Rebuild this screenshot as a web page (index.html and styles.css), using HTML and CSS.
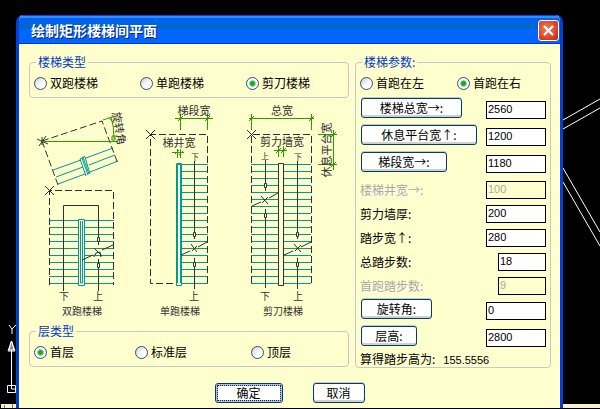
FILE: index.html
```html
<!DOCTYPE html>
<html lang="zh-CN">
<head>
<meta charset="utf-8">
<title>绘制矩形楼梯间平面</title>
<link rel="stylesheet" href="styles.css">
</head>
<body>
<svg class="canvas" aria-hidden="true">
  <g fill="none" stroke="#fff">
    <path d="M563 120L600 99M563 129L600 108M563 168L600 232M563 182L600 246"/>
    <path d="M9 325l3 4v5m0-5l4-4M11.500 341v44M8 351l3.500-10 3.500 10zM7.500 385.500h8v7h-8zM11.500 385v4h4"/>
    <path d="M9 350l2.500-9 2.500 9z" fill="#888"/>
  </g>
  <path d="M1 404h15v4H1zM563 404h37v4h-37z" fill="#f7f3cf"/>
  <path d="M4.500 405v3M12.500 404v4" stroke="#777"/>
</svg>

<form class="dialog">
  <header class="titlebar">
    <h1 class="title">绘制矩形楼梯间平面</h1>
    <button class="close" type="button" aria-label="关闭">
      <svg viewBox="0 0 19 19"><path d="M5 5l9 9M14 5l-9 9" stroke="#fff" stroke-width="2.200"/></svg>
    </button>
  </header>

  <div class="content">
    <div class="column">
      <fieldset class="group">
        <legend>楼梯类型</legend>
        <div class="choices choices-stair">
          <label class="choice"><input type="radio" name="stair">双跑楼梯</label>
          <label class="choice"><input type="radio" name="stair">单跑楼梯</label>
          <label class="choice"><input type="radio" name="stair" checked>剪刀楼梯</label>
        </div>
      </fieldset>

      <svg class="diagram" viewBox="29 98 320 226" role="img" aria-label="楼梯示意图">
        <!-- treads -->
        <g class="teal">
          <path d="M53 170L81 160M86 158L113 148M56 177L83 167M89 165L115 155M58 184L85 174M90 172L118 161"/>
          <path d="M80 159l6 17M82 158l6 17M83 157l6 17M85 157l5 17M80 159l5-3"/>
          <path d="M49 220.500h65M49 227.500h65M49 234.500h65M49 241.500h65M49 248.500h65M49 255.500h65M49 262.500h65M49 269.500h65M49 276.500h65M49 283.500h65"/>
          <path class="rail" d="M78.500 219.500h6v66h-6z"/><path d="M80.500 221v62h2v-62"/>
          <path d="M182 164.500h26M182 171.500h26M182 178.500h26M182 185.500h26M182 192.500h26M182 199.500h26M182 206.500h26M182 213.500h26M182 220.500h26M182 227.500h26M182 234.500h26M182 241.500h26M182 248.500h26M182 255.500h26M182 262.500h26M182 269.500h26M182 276.500h26M182 283.500h26"/>
          <path d="M176.500 163.500h5v122h-5zM177.500 283V164.500h3V283"/>
          <path d="M251 164.500h60M251 171.500h60M251 178.500h60M251 185.500h60M251 192.500h60M251 199.500h60M251 206.500h60M251 213.500h60M251 220.500h60M251 227.500h60M251 234.500h60M251 241.500h60M251 248.500h60M251 255.500h60M251 262.500h60M251 269.500h60M251 276.500h60M251 283.500h60"/>
        </g>
        <!-- outlines -->
        <g class="ink dashed">
          <path d="M42 141L102 121L118 164M42 141L58 185"/>
          <path d="M49.500 285V190.500H113.500V285"/>
          <path d="M207.500 283V134.500H150.500V283.500H176"/>
          <path d="M251.500 283V134.500H311.500V283"/>
        </g>
        <g class="ink">
          <path d="M37 139l11 5M39 146l7-10M42 137v8M45 186l9 9M45 195l9-9M146 130l9 9M146 139l9-9M247 130l9 9M247 139l9-9"/>
          <path d="M63.500 291V205.500H98.500V245M98.500 259v32"/>
          <path d="M82 260L93 255M102 250L113 245M94 248l8 8M94 257l2-4 4-1 1 5"/>
          <path d="M194.500 161V239M194.500 258v31"/>
          <path d="M181 255L190 251M198 247L207 242M191 244l6 8M192 251l5-5"/>
          <path class="rail" d="M278.500 163.500h5v122h-5z"/>
          <path d="M265.500 160V191M265.500 209v79"/>
          <path d="M252 206L261 202M269 198L278 193M261 196l7 8M262 203l6-6"/>
          <path d="M297.500 161V239M297.500 258v31"/>
          <path d="M284 255L293 251M301 247L311 242M294 244l7 8M295 251l6-6"/>
          <path class="rail" d="M97.500 237.500h2v4h-2zM97.500 263.500h2v4h-2zM193.500 232.500h2v4h-2zM193.500 262.500h2v4h-2zM264.500 183.500h2v4h-2zM264.500 213.500h2v4h-2zM296.500 232.500h2v4h-2zM296.500 262.500h2v4h-2z"/>
        </g>
        <!-- dimensions -->
        <g class="green">
          <path d="M42 141.500H118M103 120l9-3M111 117q3 9 3 22M109 118l4 4M112 136h3v4h-3z"/>
          <path d="M175 118.500H213M180.500 114v16M207.500 114v16M178 121l5-5M205 121l5-5"/>
          <path d="M172 152.500H184M177.500 149v9M180.500 149v9M175 154l4-4M179 155l4-4"/>
          <path d="M249 118.500H314M251.500 114v16M311.500 114v16M249 121l5-5M309 121l5-5"/>
          <path d="M274 150.500H287M278.500 146v11M283.500 146v11M276 153l5-5M281 153l5-5"/>
          <path d="M333.500 130V170M318 134.500h19M318 164.500h19M331 137l5-5M331 167l5-5"/>
        </g>
        <g class="captions">
          <text x="82" y="315">双跑楼梯</text>
          <text x="180" y="315">单跑楼梯</text>
          <text x="283" y="315">剪刀楼梯</text>
          <text x="64" y="300">下</text><text x="98" y="300">上</text>
          <text x="194" y="300">上</text>
          <text x="265" y="300">下</text><text x="298" y="300">上</text>
        </g>
        <g class="captions tiny">
          <text x="195" y="160">下</text><text x="265" y="159">上</text><text x="298" y="160">下</text>
        </g>
        <g class="captions dims">
          <text x="194" y="115">梯段宽</text>
          <text x="179" y="147">梯井宽</text>
          <text x="282" y="115">总宽</text>
          <text x="282" y="146">剪力墙宽</text>
          <text transform="translate(331 150) rotate(-90)">休息平台宽</text>
          <text transform="translate(115 129) rotate(80)">旋转角</text>
        </g>
      </svg>

      <fieldset class="group">
        <legend>层类型</legend>
        <div class="choices choices-level">
          <label class="choice"><input type="radio" name="level" checked>首层</label>
          <label class="choice"><input type="radio" name="level">标准层</label>
          <label class="choice"><input type="radio" name="level">顶层</label>
        </div>
      </fieldset>
    </div>

    <fieldset class="group">
      <legend>楼梯参数:</legend>
      <div class="choices choices-side">
        <label class="choice"><input type="radio" name="side">首跑在左</label>
        <label class="choice"><input type="radio" name="side" checked>首跑在右</label>
      </div>
      <div class="row action"><button class="button w100" type="button">楼梯总宽→:</button><input class="field" aria-label="楼梯总宽" value="2560"></div>
      <div class="row action"><button class="button w115" type="button">休息平台宽↑:</button><input class="field" aria-label="休息平台宽" value="1200"></div>
      <div class="row action"><button class="button w85" type="button">梯段宽→:</button><input class="field" aria-label="梯段宽" value="1180"></div>
      <div class="row"><label class="off" for="well">楼梯井宽→:</label><input class="field" id="well" value="100" disabled></div>
      <div class="row"><label for="wall">剪力墙厚:</label><input class="field" id="wall" value="200"></div>
      <div class="row"><label for="tread">踏步宽↑:</label><input class="field" id="tread" value="280"></div>
      <div class="row"><label for="steps">总踏步数:</label><input class="field short" id="steps" value="18"></div>
      <div class="row"><label class="off" for="first">首跑踏步数:</label><input class="field short" id="first" value="9" disabled></div>
      <div class="row action"><button class="button w70" type="button">旋转角:</button><input class="field" aria-label="旋转角" value="0"></div>
      <div class="row action"><button class="button w55" type="button">层高:</button><input class="field" aria-label="层高" value="2800"></div>
      <p class="result">算得踏步高为:<output>155.5556</output></p>
    </fieldset>
  </div>

  <footer class="buttons">
    <button class="button ok" type="submit">确定</button>
    <button class="button cancel" type="button">取消</button>
  </footer>
</form>
</body>
</html>
```

FILE: styles.css
```css
* { box-sizing: border-box; }

body {
  margin: 0;
  min-height: 100vh;
  padding: 15px 37px 1px 16px;
  background: #000;
  color: #000;
  font: 12px/14px "Noto Sans CJK SC", "Liberation Sans", sans-serif;
}

.canvas {
  position: absolute;
  top: 0;
  left: 0;
  width: 100%;
  height: 100%;
}

.dialog {
  position: relative;
  border: solid #0040d8;
  border-width: 0 3px;
  border-radius: 7px 7px 0 0;
  background: #ffffce;
  overflow: hidden;
}

.titlebar {
  display: flex;
  align-items: center;
  justify-content: space-between;
  height: 29px;
  margin: 0 -3px;
  padding: 2px 4px 0 15px;
  border-bottom: 1px solid #0038c8;
  background: linear-gradient(#0048d8 0 1px, #3090ff 1px 3px, #0060f8 3px 7px, #0066d0 7px 14px, #0066ff 14px);
}

.title {
  margin: 0;
  color: #fff;
  font-size: 14px;
  line-height: 20px;
  text-shadow: 1px 1px #00207a;
}

.close {
  width: 21px;
  height: 21px;
  padding: 0;
  border: 1px solid #fff;
  border-radius: 3px;
  background: radial-gradient(circle at 40% 40%, #f08060, #dc4428 60%, #b82808);
}

.close svg { display: block; }

.content {
  display: grid;
  grid-template-columns: 320fr 196fr;
  gap: 6px;
  padding: 11px 9px 0 10px;
}

.column { display: flex; flex-direction: column; }

.group {
  min-width: 0;
  margin: 0;
  padding: 0;
  border: 1px solid #c8c8cc;
  border-radius: 4px;
}

.group legend {
  margin-left: 6px;
  padding: 0 2px;
  color: #0038c8;
}

.diagram { display: block; width: 100%; }
.diagram path { fill: none; }
.diagram .rail { fill: #ffffce; }
.teal { stroke: #009898; }
.ink { stroke: #303030; }
.dashed { stroke-dasharray: 7 3; }
.green { stroke: #309800; }
.captions { fill: #303030; font-size: 10px; text-anchor: middle; }
.tiny { font-size: 8px; }
.dims { font-size: 11px; }

.choices {
  display: grid;
  align-items: center;
  height: 28px;
  padding-left: 4px;
}

.choices-stair { grid-template-columns: 106fr 106fr 102fr; }
.choices-level { grid-template-columns: 101fr 116fr 97fr; }
.choices-side { grid-template-columns: 97fr 93fr; }

.choice {
  display: flex;
  align-items: center;
  gap: 3px;
}

.choice input {
  appearance: none;
  width: 13px;
  height: 13px;
  margin: 0;
  border: 1px solid #285078;
  border-radius: 50%;
  background: linear-gradient(135deg, #d0d0c8, #fff 60%);
}

.choice input:checked {
  background: radial-gradient(circle, #20a820 0 2px, #a0dca0 3px, #fff 4px);
}

.row {
  display: flex;
  align-items: center;
  justify-content: space-between;
  height: 24px;
  padding: 0 4px;
}

.row.action {
  align-items: flex-start;
  height: 27px;
  padding: 1px 4px 0 5px;
}

.action .field { margin-top: 3px; }

.off {
  color: #aca899;
  text-shadow: 1px 1px #fff;
}

.field {
  width: 60px;
  height: 18px;
  padding: 0 1px 2px;
  border: 1px solid #000;
  border-radius: 0;
  background: #fff;
  color: #000;
  font: 11px/14px "Liberation Sans", sans-serif;
}

.field.short { width: 48px; }

.field:disabled {
  background: #ffffce;
  color: #aca899;
}

.button {
  height: 20px;
  padding: 0 0 1px;
  border: 1px solid #003c74;
  border-radius: 3px;
  background: #fff;
  box-shadow: inset 0 -2px #d0d0cc, 0 -1px #c8c8c8;
  color: #000;
  font: inherit;
}

.w55 { width: 56px; }
.w70 { width: 71px; }
.w85 { width: 86px; }
.w100 { width: 101px; }
.w115 { width: 116px; }

.result { margin: 0; padding-left: 4px; }

.result output {
  margin-left: 8px;
  font: 11px/14px "Liberation Sans", sans-serif;
}

.buttons {
  display: flex;
  justify-content: center;
  gap: 30px;
  padding: 15px 0 5px;
}

.ok {
  width: 68px;
  outline: 1px dotted #402010;
  outline-offset: -3px;
  box-shadow: inset 0 0 0 2px #a8c0f0;
}

.cancel { width: 52px; }
```
